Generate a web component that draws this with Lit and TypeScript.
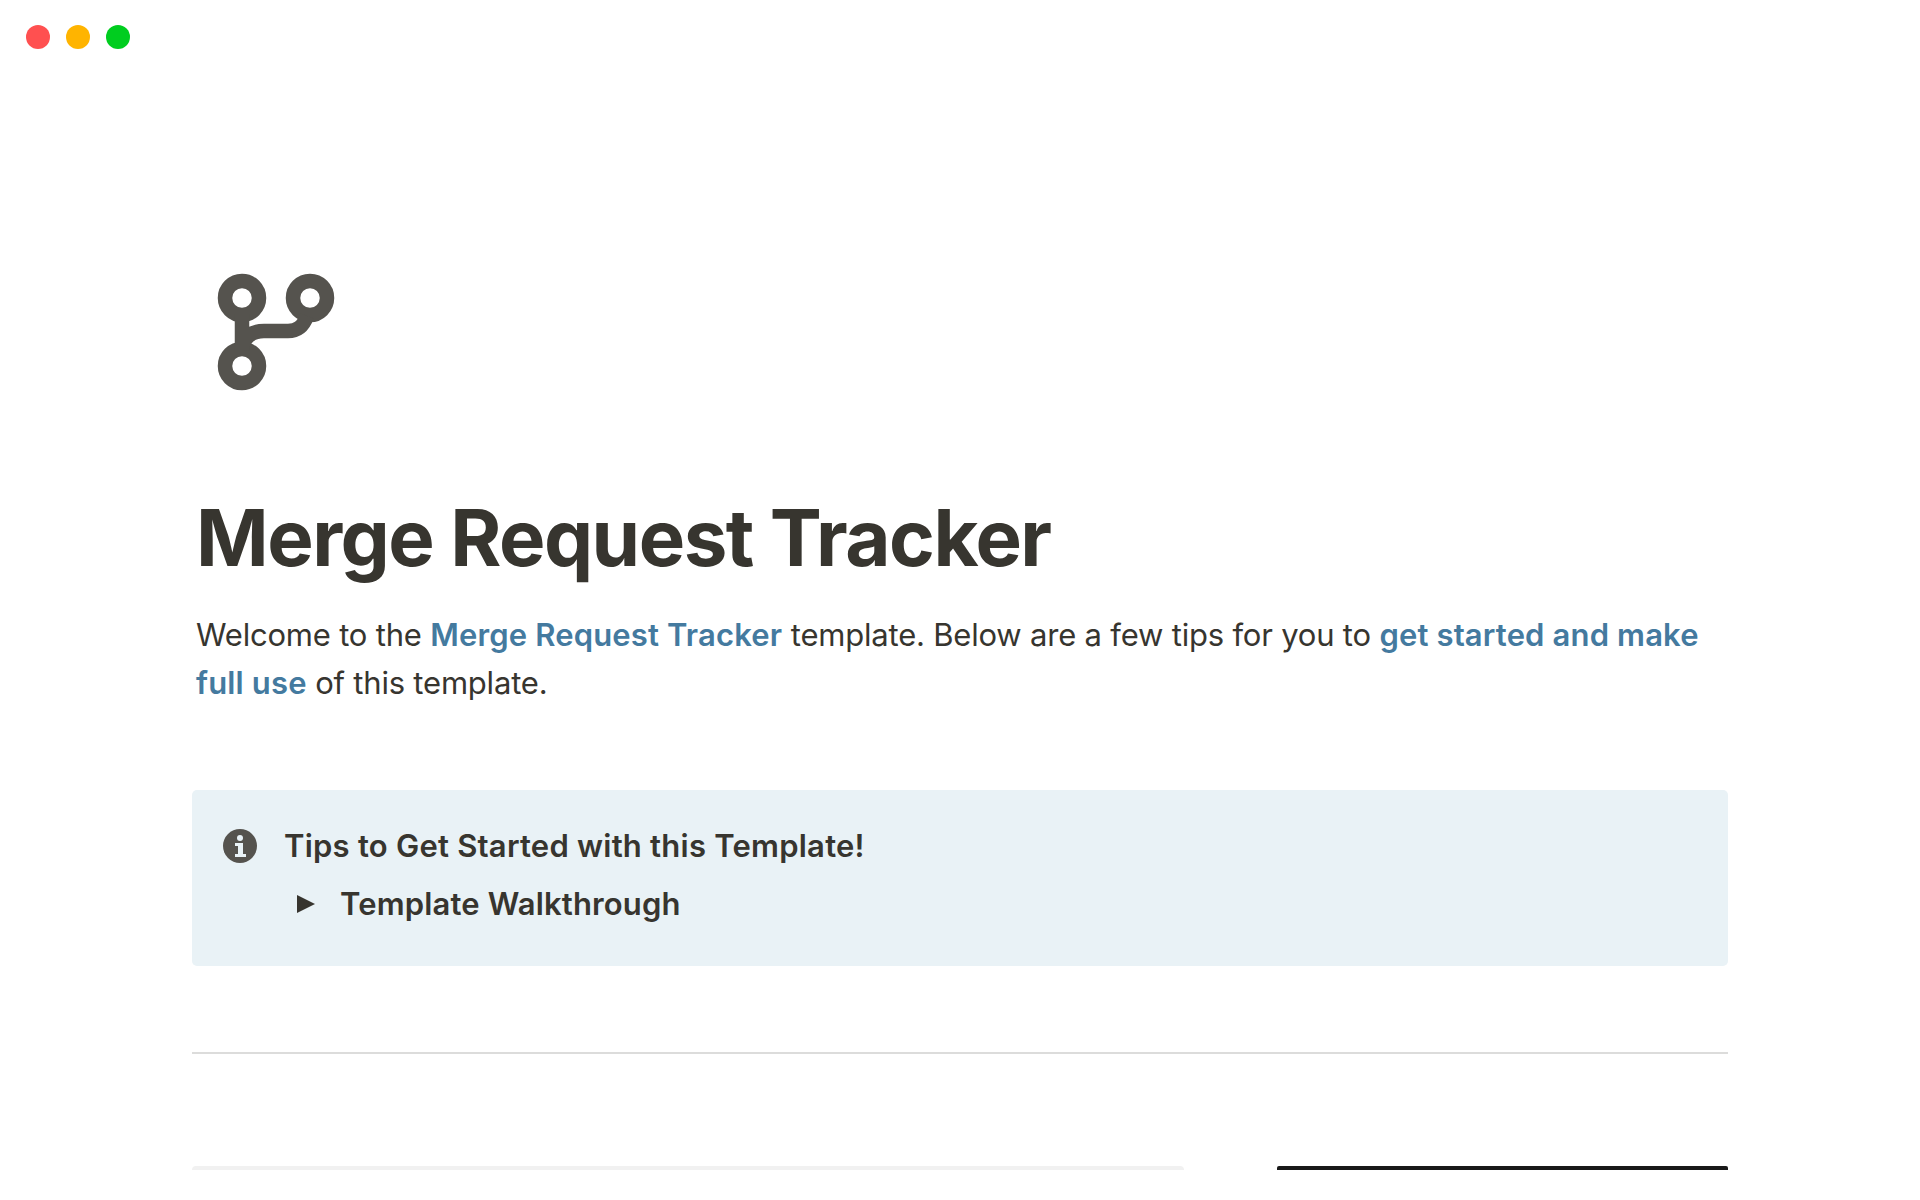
import { css, html, LitElement } from 'lit'
import { customElement } from 'lit/decorators.js'

@customElement('app-root')
export class AppRoot extends LitElement {
  static override styles = css`
    :host {
      display: block;
      height: 1200px;
      overflow: hidden;
      background: #fff;
      color: #37352f;
      font-family: Inter, 'Liberation Sans', sans-serif;
    }

    .dots {
      display: flex;
      gap: 16px;
      padding: 25px 0 0 26px;
    }

    .dot {
      width: 24px;
      height: 24px;
      border-radius: 50%;
    }

    .red {
      background: #ff5050;
    }

    .yellow {
      background: #ffb400;
    }

    .green {
      background: #00cd1f;
    }

    .page {
      width: 1536px;
      margin-left: 192px;
    }

    .logo {
      display: block;
      width: 128px;
      height: 128px;
      margin: 217px 0 0 20px;
    }

    h1 {
      margin: 99px 0 0 4px;
      font-size: 78px;
      line-height: 90px;
      font-weight: 700;
      letter-spacing: -1.5px;
    }

    .intro {
      margin: 28px 0 0 4px;
      font-size: 31px;
      line-height: 48px;
      letter-spacing: -0.2px;
    }

    .intro b {
      color: #447a9f;
      font-weight: 600;
      letter-spacing: 0.15px;
    }

    .callout {
      display: flex;
      gap: 27px;
      box-sizing: border-box;
      height: 176px;
      margin-top: 83px;
      padding: 38px 31px 0;
      background: #e9f2f6;
      border-radius: 5px;
    }

    .info {
      width: 34px;
      height: 34px;
      margin-top: 1px;
      flex: none;
    }

    .callout-title {
      font-size: 31px;
      line-height: 36px;
      font-weight: 600;
      letter-spacing: 0.23px;
    }

    .toggle {
      display: flex;
      align-items: center;
      gap: 25px;
      margin-top: 22px;
      padding-left: 13px;
      font-size: 31px;
      line-height: 36px;
      font-weight: 600;
      letter-spacing: 0.15px;
    }

    .arrow {
      width: 0;
      height: 0;
      border-left: 18px solid #37352f;
      border-top: 9px solid transparent;
      border-bottom: 9px solid transparent;
    }

    hr {
      height: 2px;
      margin: 86px 0 0;
      border: 0;
      background: #dcdcdb;
    }

    .columns {
      display: flex;
      justify-content: space-between;
      margin-top: 112px;
    }

    .left-card {
      width: 992px;
      height: 4px;
      background: #f1f1f1;
      border-radius: 4px 4px 0 0;
    }

    .right-card {
      width: 451px;
      height: 4px;
      background: #191919;
      border-radius: 2px 2px 0 0;
    }
  `

  override render() {
    return html`
      <div class="dots">
        <span class="dot red"></span>
        <span class="dot yellow"></span>
        <span class="dot green"></span>
      </div>
      <main class="page">
        <svg class="logo" viewBox="0 0 128 128" fill="none" stroke="#55534e" stroke-width="14.5">
          <circle cx="30" cy="32" r="17" />
          <circle cx="98" cy="32" r="17" />
          <circle cx="30" cy="100" r="17" />
          <path d="M30 48V84M30 84C31 71 40 65 52 65H76C85 65 91 61 95 50" />
        </svg>
        <h1>Merge Request Tracker</h1>
        <p class="intro">
          Welcome to the <b>Merge Request Tracker</b> template. Below are a few tips for you to
          <b>get started and make full use</b> of this template.
        </p>
        <section class="callout">
          <svg class="info" viewBox="0 0 34 34">
            <circle cx="17" cy="17" r="17" fill="#55534e" />
            <circle cx="17" cy="9" r="3" fill="#e9f2f6" />
            <path d="M12 14h8v11h3v3H12v-3h3v-8h-3z" fill="#e9f2f6" />
          </svg>
          <div>
            <div class="callout-title">Tips to Get Started with this Template!</div>
            <div class="toggle"><span class="arrow"></span>Template Walkthrough</div>
          </div>
        </section>
        <hr />
        <div class="columns">
          <div class="left-card"></div>
          <div class="right-card"></div>
        </div>
      </main>
    `
  }
}
